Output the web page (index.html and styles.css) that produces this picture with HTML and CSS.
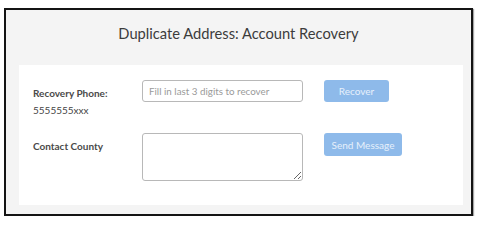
FILE: index.html
```html
<!DOCTYPE html>
<html>
<head>
<meta charset="utf-8">
<link rel="stylesheet" href="styles.css">
</head>
<body>
<div class="frame">
  <div class="header">Duplicate Address: Account Recovery</div>
  <div class="panel">
    <div class="form">
      <div class="label">
        <div class="label-title">Recovery Phone:</div>
        <div class="label-sub">5555555xxx</div>
      </div>
      <input class="field" type="text" placeholder="Fill in last 3 digits to recover">
      <div class="actions"><button class="btn btn-recover">Recover</button></div>

      <div class="label">
        <div class="label-title">Contact County</div>
      </div>
      <textarea class="area"></textarea>
      <div class="actions"><button class="btn btn-send">Send Message</button></div>
    </div>
  </div>
</div>
</body>
</html>
```

FILE: styles.css
```css
* { box-sizing: border-box; }
html, body { margin: 0; padding: 0; background: #ffffff; }
body { font-family: Lato, "Open Sans", sans-serif; color: #444; }

.frame {
  margin: 8px 0 0 4px;
  width: 469px;
  height: 208px;
  border: 2px solid #141414;
  background: #f4f4f4;
  box-shadow: 1px 1px 1px rgba(0,0,0,0.35);
  display: flex;
  flex-direction: column;
}

.header {
  height: 55px;
  padding-top: 13px;
  line-height: 20px;
  text-align: center;
  font-size: 14.7px;
  color: #3c3c3c;
}

.panel {
  margin: 0 8px 0 13px;
  height: 140px;
  background: #ffffff;
  padding: 15px 0 0 14px;
}

.form {
  display: grid;
  grid-template-columns: 88px 161px auto;
  grid-template-rows: 36px auto;
  column-gap: 21px;
  row-gap: 17px;
  align-items: start;
}

.label { padding-top: 7px; font-size: 10px; line-height: 12px; }
.label-title { font-weight: 700; color: #4a4a4a; }
.label-sub { margin-top: 5px; color: #444; }

.field {
  width: 161px;
  height: 22px;
  border: 1px solid #b8b8b8;
  border-radius: 3px;
  padding: 0 6px;
  font-family: inherit;
  font-size: 9.8px;
  color: #555;
  outline: none;
}
.field::placeholder { color: #9a9a9a; }

.area {
  width: 161px;
  height: 48px;
  border: 1px solid #b8b8b8;
  border-radius: 3px;
  resize: vertical;
  font-family: inherit;
  outline: none;
  display: block;
}

.actions { display: flex; }

.btn {
  border: none;
  border-radius: 3px;
  background: #8ebaea;
  color: #e6f0fb;
  font-family: inherit;
  font-size: 10px;
  padding: 0;
  cursor: pointer;
}
.btn-recover { width: 65px; height: 22px; }
.btn-send { width: 78px; height: 23px; }
```
